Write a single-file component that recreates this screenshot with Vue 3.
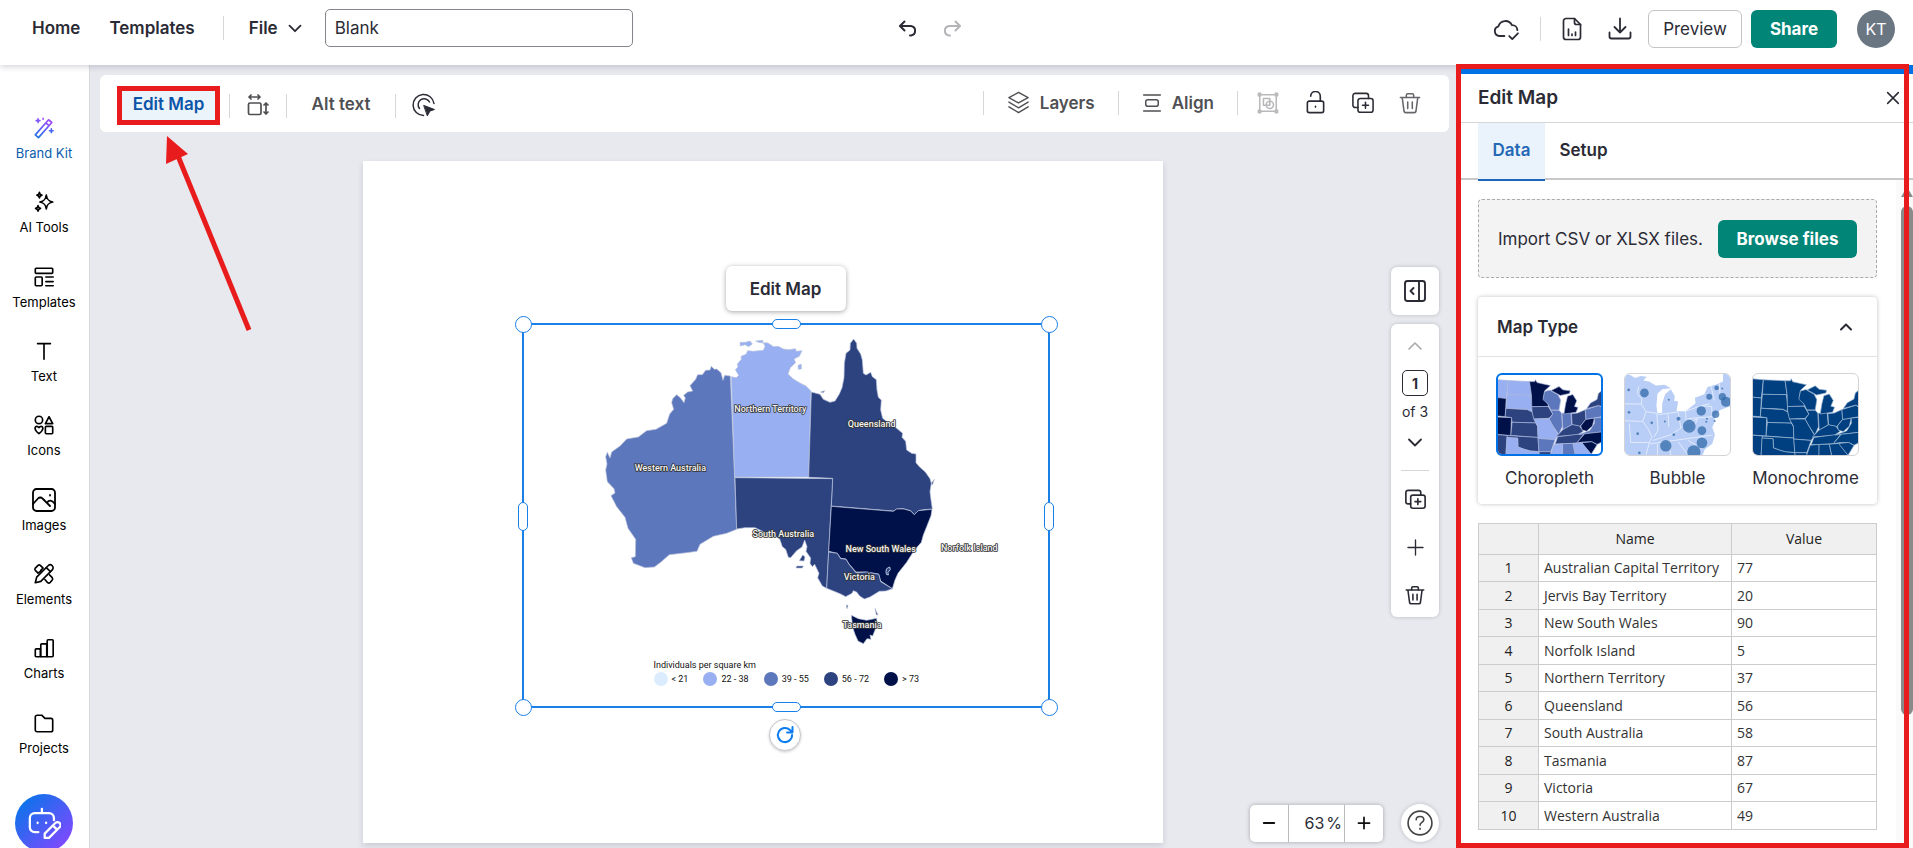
<script setup>
import { h, ref } from 'vue'

const icons = {
  chevronDown: ['M6 9.5l6 6 6-6'],
  chevronUp: ['M6 15l6-6 6 6'],
  undo: ['M8.500 4.500L4 9l4.500 4.500', 'M4.500 9H15a4.800 4.800 0 0 1 0 9.500h-1'],
  redo: ['M15.500 4.500L20 9l-4.500 4.500', 'M19.500 9H9a4.800 4.800 0 0 0 0 9.500h1'],
  cloud: ['M10.500 18.500H6A4.600 4.600 0 0 1 5 9.500 6.700 6.700 0 0 1 17.500 8.500a4.800 4.800 0 0 1 5 4.500', 'M15 18.500l2.800 2.800 5.200-5.300'],
  report: ['M14.500 1.500H6A2.500 2.500 0 0 0 3.500 4v16A2.500 2.500 0 0 0 6 22.500h12a2.500 2.500 0 0 0 2.500-2.500V7.500z', 'M14.500 1.500v4a2 2 0 0 0 2 2h4', 'M8.500 12v6.500M12 17v1.500M15.500 15v3.500'],
  download: ['M12 1.500V15M6.500 10l5.500 5.500 5.500-5.500', 'M1.500 15.500v4a2 2 0 0 0 2 2h17a2 2 0 0 0 2-2v-4'],
  wand: ['M2.500 19.500L17 3l3.500 3L6 22.500zM14 6.500l3.500 3', 'M5.500 2v4M3.500 4h4M20 13v4M18 15h4M11 1.500v1'],
  sparkle: ['M14.500 4.500c.8 5 2.500 6.700 7 7.500-4.500.8-6.200 2.500-7 7.500-.8-5-2.500-6.700-7-7.500 4.500-.8 6.200-2.500 7-7.500z', 'M7 1.500c.3 2 1 2.700 2.700 3C8 4.800 7.300 5.500 7 7.500c-.3-2-1-2.700-2.700-3C6 4.200 6.700 3.500 7 1.500z', 'M5.500 16c.3 2 1 2.700 2.700 3-1.700.3-2.400 1-2.700 3-.3-2-1-2.700-2.700-3 1.700-.3 2.400-1 2.700-3z'],
  template: ['M3.500 2.500h17a1 1 0 0 1 1 1v3.500a1 1 0 0 1-1 1h-17a1 1 0 0 1-1-1V3.500a1 1 0 0 1 1-1z', 'M3.500 12H9a1 1 0 0 1 1 1v7.500a1 1 0 0 1-1 1H3.500a1 1 0 0 1-1-1V13a1 1 0 0 1 1-1z', 'M14 12h8M14 17h8M14 21.500h8'],
  text: ['M5 4h14M12 4v17'],
  shapes: ['M6.500 2.500a4 4 0 1 1 0 8 4 4 0 0 1 0-8z', 'M17.500 3l4 7.500h-8z', 'M14.500 13.500h6a1 1 0 0 1 1 1v6a1 1 0 0 1-1 1h-6a1 1 0 0 1-1-1v-6a1 1 0 0 1 1-1z', 'M6.500 21.500c-6-4.500-4.500-8-2.500-8 1.500 0 2 .5 2.500 1.500.5-1 1-1.500 2.500-1.500 2 0 3.500 3.500-2.500 8z'],
  image: ['M4.500 1h15A3.500 3.500 0 0 1 23 4.500v15a3.500 3.500 0 0 1-3.500 3.500h-15A3.500 3.500 0 0 1 1 19.500v-15A3.500 3.500 0 0 1 4.500 1z', 'M1 16l5-5.500a3 3 0 0 1 4.500 0L18 18M15 14.500c2-2.500 4.500-3 8 1.500', 'M18 7v.500'],
  elements: ['M2.500 21.500l1.500-6L16.500 3a3 3 0 0 1 4.500 4.500L8.500 20z', 'M14.500 5l4.500 4.500M9 8.500L5.500 11 2.500 8a2 2 0 0 1 0-2.500l3-3a2 2 0 0 1 2.500 0L11 5.500 8.500 8M18 13l3 3a2 2 0 0 1 0 2.500l-2.500 3a2 2 0 0 1-2.500 0l-3-3.500'],
  charts: ['M2.500 14a1 1 0 0 1 1-1H8v8.500H3.500a1 1 0 0 1-1-1z', 'M8.500 8.500a1 1 0 0 1 1-1H15v14H8.500z', 'M15.500 4a1 1 0 0 1 1-1H21a1 1 0 0 1 1 1v16.500a1 1 0 0 1-1 1h-5.500z'],
  folder: ['M2.500 5.500a2 2 0 0 1 2-2h5l3.500 3.500h6.500a2 2 0 0 1 2 2v10.500a2 2 0 0 1-2 2h-15a2 2 0 0 1-2-2z'],
  robot: ['M8 18.500H5.500A3.500 3.500 0 0 1 2 15V8.500A3.500 3.500 0 0 1 5.500 5h10A3.500 3.500 0 0 1 19 8.500V10', 'M10.500 5V2', 'M7.500 11.800v.2M13.500 11.800v.2', 'M12.500 22.500v-3l7.500-7.500a1.800 1.800 0 0 1 3 3l-7.500 7.500zM18.500 14l2.500 2.500'],
  resize: ['M4 10h9.500a1.500 1.500 0 0 1 1.500 1.500V20a1.500 1.500 0 0 1-1.500 1.500H4A1.500 1.500 0 0 1 2.500 20v-8.500A1.500 1.500 0 0 1 4 10z', 'M3 4h11M5 2L3 4l2 2M12 2l2 2-2 2', 'M20 10v11M18 12l2-2 2 2M18 19l2 2 2-2'],
  click: ['M11.500 22.500A10.500 10.500 0 1 1 22 10.500M7.500 15.500A6 6 0 1 1 17.500 9'],
  layers: ['M12 1.500L22 7l-10 5.500L2 7z', 'M2 11.500l10 6 10-6M2 16.500l10 6 10-6'],
  align: ['M2 2.500h20M2 21.500h20', 'M7 8h10a2.500 2.500 0 0 1 2.500 2.500v3A2.500 2.500 0 0 1 17 16H7a2.500 2.500 0 0 1-2.500-2.500v-3A2.500 2.500 0 0 1 7 8z'],
  group: ['M3 3h18v18H3z', 'M7 7h7v7.500H7z', 'M14 10a4 4 0 1 1 0 8 4 4 0 0 1 0-8z', 'M1.500 1.500h2.500v2.500H1.500zM20 1.500h2.500v2.500H20zM1.500 20h2.500v2.500H1.500zM20 20h2.500v2.500H20z'],
  lock: ['M5.500 10.500h13a2 2 0 0 1 2 2v8a2 2 0 0 1-2 2h-13a2 2 0 0 1-2-2v-8a2 2 0 0 1 2-2z', 'M7 5.500a5 5 0 0 1 10 0v5M12 16v.800'],
  duplicate: ['M9 7h11.500A2.500 2.500 0 0 1 23 9.500v10a2.500 2.500 0 0 1-2.500 2.500H9a2.500 2.500 0 0 1-2.500-2.500v-10A2.500 2.500 0 0 1 9 7z', 'M6.500 17H3.500A2.500 2.500 0 0 1 1 14.500V4a2.500 2.500 0 0 1 2.500-2.500h12A2.500 2.500 0 0 1 18 4v3', 'M11.500 14.500h6.500M14.700 11.200v6.600'],
  trash: ['M1.500 6h21M3.500 6l2 15a1.800 1.800 0 0 0 1.800 1.500h9.400a1.800 1.800 0 0 0 1.800-1.500l2-15', 'M8 6V3.500A1.500 1.500 0 0 1 9.500 2h5A1.500 1.500 0 0 1 16 3.500V6M9.500 11v7M14.500 11v7'],
  plus: ['M12 2.500v19M2.500 12h19'],
  minus: ['M3 12h18'],
  close: ['M4 4l16 16M20 4L4 20'],
  dock: ['M4.500 2h15A2.500 2.500 0 0 1 22 4.500v15a2.500 2.500 0 0 1-2.500 2.500h-15A2.500 2.500 0 0 1 2 19.500v-15A2.500 2.500 0 0 1 4.500 2z', 'M16 2v20M10.500 9L7.500 12l3 3'],
  help: ['M12 1a11 11 0 1 1 0 22 11 11 0 0 1 0-22z', 'M8.500 9c0-4 7-4 7 0 0 2.500-3.500 2.500-3.500 5M12 17v.800'],
  rotate: ['M20.500 12a8.500 8.500 0 1 1-2.500-6l2.500 2.500M21 2.500v6.500h-6.500'],
}

const Ico = (p) => h('svg', {
  viewBox: '0 0 24 24', width: p.size || 24, height: p.size || 24, fill: 'none',
  stroke: p.stroke || 'currentColor', 'stroke-width': p.w || 1.7,
  'stroke-linecap': 'round', 'stroke-linejoin': 'round', 'aria-hidden': 'true',
}, [
  ...icons[p.name].map((d) => h('path', { d })),
  p.name === 'click' ? h('path', { d: 'M12 12.500l10.500 4-4.500 1.500-2.500 4.500z', fill: 'currentColor', 'stroke-width': 1 }) : null,
])
Ico.props = ['name', 'size', 'w', 'stroke']

const title = ref('Blank')
const rail = [
  { icon: 'wand', label: 'Brand Kit', brand: true },
  { icon: 'sparkle', label: 'AI Tools' },
  { icon: 'template', label: 'Templates' },
  { icon: 'text', label: 'Text' },
  { icon: 'shapes', label: 'Icons' },
  { icon: 'image', label: 'Images' },
  { icon: 'elements', label: 'Elements' },
  { icon: 'charts', label: 'Charts' },
  { icon: 'folder', label: 'Projects' },
]
const rows = [
  ['Australian Capital Territory', 77], ['Jervis Bay Territory', 20], ['New South Wales', 90],
  ['Norfolk Island', 5], ['Northern Territory', 37], ['Queensland', 56], ['South Australia', 58],
  ['Tasmania', 87], ['Victoria', 67], ['Western Australia', 49],
]
const [PALE, LIGHT, MID, DARK, DEEP] = ['#dcecff', '#98b0f1', '#5d77bd', '#2c4380', '#00114a']

const regions = [
  { fill: MID, d: 'M661 198 674 502 680 658 650 670 610 679 570 703 561 724 530 728 478 734 452 757 433 771 405 773 370 760 364 743 376 740 377 688 354 655 345 622 320 590 303 557 315 549 312 536 292 515 287 480 291 462 287 440 292 427 300 444 305 426 330 408 350 387 385 381 410 362 438 358 470 340 479 312 491 298 485 278 488 266 500 254 511 263 522 278 526 264 521 256 533 246 548 243 540 227 557 208 563 194 577 194 587 181 600 180 604 169 613 178 620 177 633 188 639 211 644 196z' },
  { fill: LIGHT, d: 'M664 200 679 203 686 196 676 179 684 171 682 162 694 148 693 139 708 133 713 122 730 124 760 121 765 109 760 98 774 99 791 110 805 109 820 117 837 119 856 116 859 124 876 122 868 139 852 147 857 158 841 173 834 192 850 207 870 219 888 228 903 243 896 501 674 501z M690 97 706 97 720 93 727 102 716 110 705 104 691 108z M737 93 759 91 758 99 745 97z M864 166 874 163 874 177 865 178z' },
  { fill: DARK, d: 'M904 246 930 253 940 268 960 277 975 273 988 252 996 233 1002 203 1003 160 1008 130 1020 120 1021 100 1031 87 1040 100 1041 115 1052 132 1057 150 1060 190 1068 195 1082 187 1087 200 1099 209 1101 240 1105 262 1114 270 1112 300 1118 325 1140 342 1160 355 1178 370 1176 382 1187 394 1190 420 1205 430 1218 432 1218 458 1228 470 1246 486 1260 506 1264 520 1260 545 1263 570 1267 597 1240 599 1225 602 1213 614 1202 602 1180 596 1160 597 1150 603 964 588 968 505 896 502z M932 246 944 242 940 248z M1264 520 1273 508 1267 525z' },
  { fill: DARK, d: 'M675 503 968 506 956 725 950 835 937 828 923 803 927 790 914 763 907 770 900 760 902 744 888 724 891 710 884 690 876 711 860 722 842 743 835 742 827 718 817 710 809 687 790 675 760 665 735 653 705 653 680 657z M878 735 885 740 882 753 868 752z M860 768 880 768 877 774 858 774z' },
  { fill: DEEP, d: 'M964 589 1150 604 1160 597 1182 597 1202 603 1213 614 1225 602 1266 598 1263 617 1250 650 1240 675 1234 697 1212 722 1190 757 1164 790 1155 810 1147 836 1112 813 1106 792 1068 786 1038 786 1017 762 1008 747 992 745 982 730 956 724z' },
  { fill: DARK, d: 'M956 726 982 730 992 746 1008 748 1017 763 1038 788 1070 786 1106 793 1112 815 1147 836 1128 843 1108 844 1080 861 1063 867 1049 858 1040 846 1030 842 1026 850 1007 860 992 852 968 842 950 835z' },
  { fill: DEEP, d: 'M1024 916 1045 926 1070 931 1100 925 1101 945 1088 978 1080 975 1083 988 1071 986 1060 1001 1044 993 1035 973 1028 952z M1009 886 1014 886 1011 896z M1095 895 1099 905 1104 915 1099 914z' },
]
const mapLabels = [
  ['Northern Territory', 781, 306], ['Western Australia', 481, 482], ['Queensland', 1085, 350],
  ['South Australia', 820, 681], ['New South Wales', 1112, 725], ['Norfolk Island', 1378, 722],
  ['Victoria', 1048, 810], ['Tasmania', 1056, 954],
]
const legend = [[PALE, '< 21'], [LIGHT, '22 - 38'], [MID, '39 - 55'], [DARK, '56 - 72'], [DEEP, '> 73']]

const states = [
  [LIGHT, '168 298 203 301 197 355 168 352'], [LIGHT, '203 301 268 304 274 345 200 344'],
  [LIGHT, '200 344 272 345 276 380 274 395 262 388 196 385'], [DEEP, '168 352 197 355 194 410 168 408'],
  [DARK, '196 385 262 389 276 396 287 429 215 427 213 413 194 410'], [DEEP, '168 411 213 413 211 467 168 464'],
  [DARK, '215 427 287 429 293 440 294 473 211 467'], [DARK, '200 467 294 473 297 516 270 514 250 508 233 502 232 475 199 473'],
  [DARK, '168 464 200 467 196 530 168 530'], [LIGHT, '199 473 232 475 233 502 255 510 272 514 297 516 299 530 196 530'],
  [DEEP, '268 304 284 304 286 298 291 307 310 311 332 316 314 332 311 352 326 374 325 379 275 380 274 345'],
  [DARK, '275 380 325 379 339 402 328 415 281 417 276 396'], [LIGHT, '281 417 328 417 340 438 356 465 346 480 294 476 293 438'],
  [MID, '294 476 346 480 333 516 297 516'], [DARK, '297 516 333 516 334 530 299 530'],
  [MID, '314 334 330 330 355 344 363 360 358 390 333 390 324 372 309 358'], [MID, '333 391 358 391 366 400 368 440 357 464 340 438 328 417 339 402'],
  [MID, '367 400 394 398 397 434 370 450'], [DEEP, '384 348 400 343 412 362 405 379 416 382 410 397 373 402 378 372'],
  [DEEP, '334 331 358 319 370 329 392 332 390 340 362 346'], [DARK, '396 401 415 399 438 389 440 418 422 440 398 434'],
  [DARK, '350 470 369 450 398 434 420 438 432 454 415 465'], [DARK, '346 493 354 471 435 461 412 490'],
  [DEEP, '424 438 440 418 466 414 460 438 442 454 428 450'], [MID, '438 389 480 376 490 384 490 410 440 418'],
  [DARK, '442 386 454 369 474 358 478 340 490 330 490 380 478 376'], [MID, '418 464 452 452 466 430 466 414 490 412 490 456 436 462'],
  [DEEP, '412 490 436 462 490 456 490 486 474 494 458 486 428 487'], [DEEP, '426 489 458 486 474 495 456 524'],
  [LIGHT, '400 491 428 489 456 524 454 530 408 530'], [MID, '369 492 400 491 408 530 368 530'], [LIGHT, '343 494 369 492 369 530 330 530'],
].map(([fill, pts]) => ({ fill, pts }))

const bubbles = [
  [611, 340, 13], [564, 331, 4], [565, 397, 4], [684, 360, 3], [633, 428, 4], [672, 424, 3], [591, 460, 4], [596, 517, 4],
  [699, 463, 4], [713, 416, 6], [745, 438, 19], [781, 393, 14], [783, 451, 13], [783, 487, 16], [759, 514, 20],
  [675, 496, 17], [805, 351, 9], [827, 325, 7], [844, 327, 3], [844, 351, 11], [855, 366, 15], [824, 403, 11], [798, 416, 3], [821, 423, 3], [796, 425, 3],
]
</script>

<template>
  <div class="app">
    <header class="top">
      <div class="top-left">
        <a href="#" class="nav">Home</a>
        <a href="#" class="nav second">Templates</a>
        <span class="vline"></span>
        <button class="file">File <Ico name="chevronDown" :size="22" w="2" /></button>
        <input v-model="title" class="title" aria-label="Project title" />
      </div>
      <div class="history">
        <button aria-label="Undo"><Ico name="undo" w="2" /></button>
        <button aria-label="Redo" disabled><Ico name="redo" w="2" /></button>
      </div>
      <div class="top-right">
        <button aria-label="Saved"><Ico name="cloud" :size="26" /></button>
        <span class="vline"></span>
        <button aria-label="Report"><Ico name="report" /></button>
        <button aria-label="Download"><Ico name="download" w="1.8" /></button>
        <div class="actions">
          <button class="preview">Preview</button>
          <button class="green share">Share</button>
        </div>
        <button class="avatar">KT</button>
      </div>
    </header>

    <div class="body">
      <nav class="rail">
        <svg class="defs" aria-hidden="true"><defs><linearGradient id="brand" x1="0" y1="1" x2=".3" y2="0"><stop offset="0" stop-color="#1473e6" /><stop offset="1" stop-color="#9a4dff" /></linearGradient></defs></svg>
        <ul>
          <li v-for="r in rail" :key="r.label">
            <a href="#" :class="{ brand: r.brand }">
              <Ico :name="r.icon" :size="r.icon === 'image' ? 24 : 22" w="1.8" :stroke="r.brand ? 'url(#brand)' : 'currentColor'" />
              <span>{{ r.label }}</span>
            </a>
          </li>
        </ul>
        <button class="bot" aria-label="Assistant"><Ico name="robot" :size="34" w="1.600" /></button>
      </nav>

      <main class="work">
        <div class="toolbar">
          <div class="tools-left">
            <button class="edit">Edit Map</button>
            <span class="vline"></span>
            <button class="sq" aria-label="Resize"><Ico name="resize" /></button>
            <span class="vline"></span>
            <button class="alt">Alt text</button>
            <span class="vline"></span>
            <button class="sq dark" aria-label="Interactivity"><Ico name="click" w="1.500" /></button>
          </div>
          <div class="tools-right">
            <span class="vline"></span>
            <button class="labelled"><Ico name="layers" :size="23" w="1.500" />Layers</button>
            <span class="vline"></span>
            <button class="labelled"><Ico name="align" :size="20" w="1.800" />Align</button>
            <span class="vline"></span>
            <div class="quick">
              <button aria-label="Group" disabled><Ico name="group" :size="22" /></button>
              <button aria-label="Lock"><Ico name="lock" :size="23" /></button>
              <button aria-label="Duplicate"><Ico name="duplicate" :size="22" /></button>
              <button class="muted" aria-label="Delete"><Ico name="trash" :size="22" /></button>
            </div>
          </div>
        </div>

        <div class="stage">
          <section class="page">
            <div class="selection">
              <button class="pill">Edit Map</button>
              <svg class="map" viewBox="39 42 1578 1149" role="img" aria-label="Map of Australia">
                <path v-for="(r, i) in regions" :key="i" :d="r.d" :fill="r.fill" stroke="#b9c3dc" stroke-width="2" stroke-linejoin="round" />
                <path d="M1130 776l9-5 2 8-7 8 1 8-6-2-1-10z" fill="#2c4380" stroke="#b9c3dc" stroke-width="3" />
                <text v-for="[t, x, y] in mapLabels" :key="t" :x="x" :y="y" class="maptext">{{ t }}</text>
              </svg>
              <div class="legend">
                <p>Individuals per square km</p>
                <ul>
                  <li v-for="[c, t] in legend" :key="t"><i :style="{ background: c }"></i>{{ t }}</li>
                </ul>
              </div>
              <i v-for="c in ['tl', 'tr', 'bl', 'br']" :key="c" class="dot" :class="c"></i>
              <i v-for="c in ['t', 'b', 'l', 'r']" :key="c" class="grip" :class="c"></i>
              <button class="rotate" aria-label="Rotate"><Ico name="rotate" :size="20" w="2.400" /></button>
            </div>
          </section>
        </div>

        <div class="side">
          <button class="card dock" aria-label="Open pages"><Ico name="dock" w="1.900" /></button>
          <div class="card pages">
            <button aria-label="Previous page" disabled><Ico name="chevronUp" w="1.600" /></button>
            <div class="count"><input value="1" aria-label="Page" /><span>of 3</span></div>
            <button aria-label="Next page"><Ico name="chevronDown" w="1.800" /></button>
            <hr />
            <button aria-label="Duplicate page"><Ico name="duplicate" :size="21" w="1.900" /></button>
            <button aria-label="Add page"><Ico name="plus" :size="19" /></button>
            <button aria-label="Delete page"><Ico name="trash" :size="20" w="1.900" /></button>
          </div>
        </div>
        <div class="bottom">
          <div class="zoom">
            <button aria-label="Zoom out"><Ico name="minus" :size="14" w="3.200" /></button>
            <span class="pct"><span>63</span><span>%</span></span>
            <button aria-label="Zoom in"><Ico name="plus" :size="14" w="3" /></button>
          </div>
          <button class="help" aria-label="Help"><Ico name="help" :size="26" w="1.500" /></button>
        </div>
      </main>

      <aside class="panel">
        <div class="panel-head">
          <h2>Edit Map</h2>
          <button aria-label="Close"><Ico name="close" :size="16" w="2.300" /></button>
        </div>
        <div class="tabs">
          <button class="active">Data</button>
          <button>Setup</button>
        </div>
        <div class="scroll">
          <div class="content">
            <div class="import">
              <span>Import CSV or XLSX files.</span>
              <button class="green">Browse files</button>
            </div>
            <section class="types">
              <div class="types-head">
                <h3>Map Type</h3>
                <button aria-label="Collapse"><Ico name="chevronUp" :size="20" w="2.400" /></button>
              </div>
              <div class="options">
                <button class="on">
                  <svg viewBox="172 284 314 239" preserveAspectRatio="none">
                    <polygon v-for="(s, i) in states" :key="i" :points="s.pts" :fill="s.fill" stroke="#a9b6dc" stroke-width="2" />
                  </svg>
                  Choropleth
                </button>
                <button>
                  <svg viewBox="553 284 314 239" preserveAspectRatio="none">
                    <path fill="#b9cef6" d="M550 280 570 288 583 296 600 290 618 292 608 303 625 306 645 318 672 316 690 326 664 329 650 342 647 378 650 400 664 398 664 372 673 344 690 329 702 350 700 363 712 365 707 394 734 394 764 370 762 354 790 344 800 322 828 314 846 306 846 280 870 280 870 378 838 390 823 404 820 428 814 442 822 463 814 490 792 506 782 530 550 530z" />
                    <path fill="none" stroke="#f4f7ff" stroke-width="2" d="M553 372 602 373 603 358 590 342 594 320M602 373 616 395 606 424 553 422M606 424 622 446 634 470 626 486 570 486 566 430M616 395 648 400 652 450 640 470M652 404 712 396 720 444 688 464 636 480M682 402 684 440M734 394 736 426 720 444M734 394 780 378 812 380 814 410 740 416M740 430 770 416 756 448 734 456M628 490 816 464M650 490 650 523M684 486 690 523M712 484 742 523M742 480 784 506M782 378 806 372M810 318 820 362M835 312 838 355M626 486 616 523" />
                    <circle v-for="([x, y, r], i) in bubbles" :key="i" :cx="x" :cy="y" :r="r" fill="#3069a8" fill-opacity=".75" />
                  </svg>
                  Bubble
                </button>
                <button>
                  <svg viewBox="172 284 314 239" preserveAspectRatio="none">
                    <polygon v-for="(s, i) in states" :key="i" :points="s.pts" fill="#003f80" stroke="#9db8d4" stroke-width="2" />
                  </svg>
                  Monochrome
                </button>
              </div>
            </section>
            <table>
              <thead><tr><th class="num"></th><th class="name">Name</th><th>Value</th></tr></thead>
              <tbody>
                <tr v-for="([n, v], i) in rows" :key="n"><th>{{ i + 1 }}</th><td>{{ n }}</td><td>{{ v }}</td></tr>
              </tbody>
            </table>
          </div>
          <div class="bar"><i class="up"></i><i class="thumb"></i></div>
        </div>
        <div class="mark"></div>
      </aside>
      <svg class="arrow" width="90" height="200" viewBox="0 0 90 200" aria-hidden="true">
        <path d="M16 20L87 194" stroke="#e81c1c" stroke-width="5" />
        <path d="M5 0L26 18 4 28z" fill="#e81c1c" />
      </svg>
    </div>
  </div>
</template>

<style>
body { margin: 0; overflow: hidden; }
</style>

<style scoped>
* { box-sizing: border-box; }
.app { height: 100vh; display: flex; flex-direction: column; font: 17px/20px Inter, sans-serif; color: #2b2b35; background: #fff; }
button, input { font: inherit; color: inherit; margin: 0; }
button { border: 0; padding: 0; background: none; display: flex; align-items: center; justify-content: center; }
ul, p, h2, h3 { margin: 0; padding: 0; list-style: none; }
a { color: inherit; text-decoration: none; }
svg { display: block; flex: none; }
.vline { width: 1px; height: 24px; background: #d6d6da; flex: none; }
.green { background: #008577; color: #fff; font-weight: 700; border-radius: 6px; height: 38px; }

.top { height: 65px; flex: none; display: grid; grid-template-columns: 1fr auto 1fr; align-items: start; padding: 10px 18px 0 32px; background: #fff; position: relative; z-index: 2; box-shadow: 0 2px 6px rgba(30, 30, 60, .18); }
.top-left, .history, .top-right { display: flex; align-items: center; height: 38px; }
.top-left { margin-top: -1px; }
.nav { font-weight: 600; }
.second { margin: 0 28px 0 29px; }
.file { font-weight: 600; margin-left: 25px; gap: 6px; }
.title { margin-left: 19px; width: 308px; height: 38px; border: 1px solid #85858c; border-radius: 5px; padding: 0 9px; background: #fff; }
.history { gap: 20px; padding-right: 68px; }
.history button:disabled { color: #b4b4b8; }
.top-right { justify-content: flex-end; }
.top-right .vline { margin: 0 19px 0 21px; }
.top-right > button + button { margin-left: 24px; }
.actions { display: flex; gap: 9px; margin: 0 20px 0 16px; }
.preview { width: 94px; height: 38px; border: 1px solid #c4c4c8; border-radius: 6px; }
.share { width: 86px; }
.avatar { width: 38px; height: 38px; border-radius: 50%; background: #6b7683; color: #fff; font-size: 16px; }

.body { flex: 1; min-height: 0; display: flex; position: relative; }
.rail { width: 90px; flex: none; border-right: 1px solid #d9d9de; padding-top: 42px; display: flex; flex-direction: column; background: #fff; color: #000; }
.defs { position: absolute; width: 0; height: 0; }
.rail ul { flex: 1; display: flex; flex-direction: column; }
.rail li { flex: 1; }
.rail a { display: flex; flex-direction: column; align-items: center; font-size: 13px; line-height: 16px; padding-top: 9px; padding-right: 1px; }
.rail a svg { height: 24px; margin-bottom: 5px; }
.rail .brand { color: #0b5cad; }
.bot { width: 58px; height: 58px; border-radius: 50%; margin: 18px 0 -4px 15px; flex: none; background: linear-gradient(135deg, #0a74ea 10%, #8348ff 90%); color: #fff; }

.work { flex: 1; min-width: 0; background: #e8e9ef; display: flex; flex-direction: column; position: relative; overflow: hidden; }
.toolbar { margin: 10px 8px 0 10px; height: 57px; flex: none; border-radius: 6px; background: #fff; display: flex; justify-content: space-between; align-items: center; padding: 0 28px 0 17px; font-weight: 600; color: #505054; }
.tools-left, .tools-right, .quick { display: flex; align-items: center; }
.tools-left { padding-top: 4px; }
.edit { width: 103px; height: 39px; border: 5px solid #e81c1c; background: #ebf3fb; color: #0b55a8; font-weight: 600; margin-right: 9px; padding-bottom: 3px; }
.sq { width: 56px; height: 32px; padding-bottom: 1px; }
.sq.dark { width: 55px; color: #2b2b35; }
.alt { width: 108px; font-weight: 600; padding-bottom: 3px; }
.tools-right { padding-bottom: 2px; }
.labelled { font-weight: 600; gap: 10px; padding: 0 23px; }
.quick { gap: 25px; padding-left: 19px; color: #2b2b35; }
.quick button:disabled { color: #b9b9bc; }
.quick .muted { color: #66666b; }

.stage { flex: 1; display: flex; justify-content: center; padding: 29px 22px 5px 0; }
.page { width: 800px; background: #fff; box-shadow: 0 3px 6px rgba(40, 40, 70, .15); position: relative; }
.selection { position: absolute; left: 20%; top: 163px; width: 526px; height: 383px; outline: 2px solid #1a80e8; outline-offset: -1px; }
.map { width: 100%; height: 100%; }
.maptext { font: 500 27px Roboto, sans-serif; text-anchor: middle; fill: #f4f4f4; stroke: #333; stroke-width: 5px; paint-order: stroke; stroke-linejoin: round; }
.pill { position: absolute; left: 50%; top: -58px; width: 120px; height: 45px; margin-left: -60px; background: #fff; border-radius: 6px; box-shadow: 0 1px 5px rgba(0, 0, 0, .35); font-weight: 600; }
.legend { position: absolute; left: 131px; top: 335px; font: 9px/12px Roboto, sans-serif; color: #111; }
.legend ul { display: flex; gap: 15px; margin-top: 1px; }
.legend li { display: flex; align-items: center; gap: 4px; height: 14px; white-space: nowrap; }
.legend li i { width: 14px; height: 14px; border-radius: 50%; }
.dot, .grip { position: absolute; background: #fff; border: 1px solid #1a80e8; }
.dot { width: 17px; height: 17px; border-radius: 50%; }
.tl, .tr { top: -8px; } .bl, .br { bottom: -9px; } .tl, .bl { left: -8px; } .tr, .br { right: -9px; }
.grip { border-radius: 5px; }
.grip.t, .grip.b { width: 29px; height: 10px; left: 249px; } .grip.l, .grip.r { width: 10px; height: 29px; top: 178px; }
.grip.t { top: -5px; } .grip.b { bottom: -5px; } .grip.l { left: -5px; } .grip.r { right: -5px; }
.rotate { position: absolute; left: 246px; top: 395px; width: 32px; height: 32px; border: 1px solid #c5c8ce; border-radius: 50%; background: #fff; color: #0d7cf0; box-shadow: 0 1px 3px rgba(0, 0, 0, .2); }

.side { position: absolute; right: 18px; top: 202px; width: 48px; display: flex; flex-direction: column; gap: 9px; }
.card { background: #fff; border-radius: 6px; box-shadow: 0 0 4px rgba(0, 0, 0, .2); }
.dock { height: 48px; }
.pages { display: flex; flex-direction: column; align-items: center; padding: 10px 0 10px; }
.pages button { height: 24px; }
.pages button:disabled { color: #a8a8ac; }
.count { display: flex; flex-direction: column; align-items: center; margin: 12px 0 8px; font-size: 14px; }
.count input { width: 26px; height: 26px; border: 1px solid #2b2b35; border-radius: 5px; text-align: center; padding: 0; font-weight: 700; background: #fff; margin-bottom: 6px; }
.pages hr { width: 28px; border: 0; border-top: 1px solid #d6d6da; margin: 16px 0; }
.pages hr ~ button + button { margin-top: 24px; }
.bottom { position: absolute; right: 18px; bottom: 6px; display: flex; align-items: center; gap: 18px; font-size: 16px; }
.zoom { display: flex; height: 37px; background: #fff; border-radius: 5px; box-shadow: 0 0 4px rgba(0, 0, 0, .3); color: #111; }
.zoom button { width: 38px; }
.pct { width: 57px; border: solid #bbb; border-width: 0 1px; display: flex; align-items: center; justify-content: flex-end; gap: 2px; padding-right: 2px; color: #2b2b35; }
.help { width: 38px; height: 38px; border-radius: 50%; background: #fff; box-shadow: 0 0 4px rgba(0, 0, 0, .2); color: #444; }

.panel { width: 456px; flex: none; background: #fff; border-top: 9px solid #0072e6; display: flex; flex-direction: column; position: relative; z-index: 3; padding-left: 4px; }
.panel-head { height: 49px; flex: none; border-bottom: 1px solid #d6d6da; display: flex; justify-content: space-between; align-items: center; padding: 0 12px 0 17px; }
h2 { font-size: 19px; line-height: 24px; font-weight: 600; }
.tabs { height: 57px; flex: none; border-bottom: 2px solid #c8c8cb; display: flex; padding-left: 17px; }
.tabs button { width: 67px; height: 58px; font-weight: 600; border-bottom: 2px solid transparent; padding-bottom: 2px; }
.tabs button + button { width: 77px; }
.tabs .active { background: #eaf3fb; color: #2568b5; border-color: #1d66b8; }
.scroll { flex: 1; min-height: 0; display: flex; overflow: hidden; }
.content { flex: 1; min-width: 0; padding: 19px 19px 0 17px; }
.import { height: 79px; border: 1px dashed #aaaaae; border-radius: 4px; background: #f3f3f4; display: flex; align-items: center; justify-content: space-between; padding: 0 19px; }
.import span { white-space: nowrap; }
.import .green { width: 139px; }
.types { margin: 19px 0; border-radius: 4px; box-shadow: 0 0 4px rgba(0, 0, 0, .25); }
.types-head { height: 60px; border-bottom: 1px solid #e2e2e5; display: flex; align-items: center; justify-content: space-between; padding: 0 21px 0 19px; }
h3 { font-size: 17px; font-weight: 600; }
.options { display: flex; justify-content: space-between; padding: 16px 18px; }
.options button { flex-direction: column; width: 107px; gap: 12px; }
.options svg { width: 100%; height: 83px; border: 1px solid #d4d4d8; border-radius: 6px; }
.options .on svg { border: 2px solid #0072e6; }
table { width: 100%; border-collapse: collapse; table-layout: fixed; font: 14px/18px "Open Sans", sans-serif; color: #333; }
th, td { border: 1px solid #ccc; padding: 0 5px; text-align: left; font-weight: 400; white-space: nowrap; }
th { background: #f0f0f0; text-align: center; color: #222; }
.num { width: 60px; } .name { width: 193px; }
thead tr { height: 31px; }
tbody tr { height: 27px; }
tbody tr:nth-child(even) { height: 28px; }
.bar { width: 17px; background: #fafafa; display: flex; flex-direction: column; align-items: flex-end; padding-top: 7px; gap: 9px; }
.up { border: 6px solid transparent; border-top: 0; border-bottom: 10px solid #8a8a8a; }
.thumb { width: 12px; height: 509px; border-radius: 6px; background: #8a8a8a; }
.mark { position: absolute; inset: -10px 4px 0 -1px; border: 5px solid #e81c1c; pointer-events: none; }
.arrow { position: absolute; left: 162px; top: 71px; }
</style>
